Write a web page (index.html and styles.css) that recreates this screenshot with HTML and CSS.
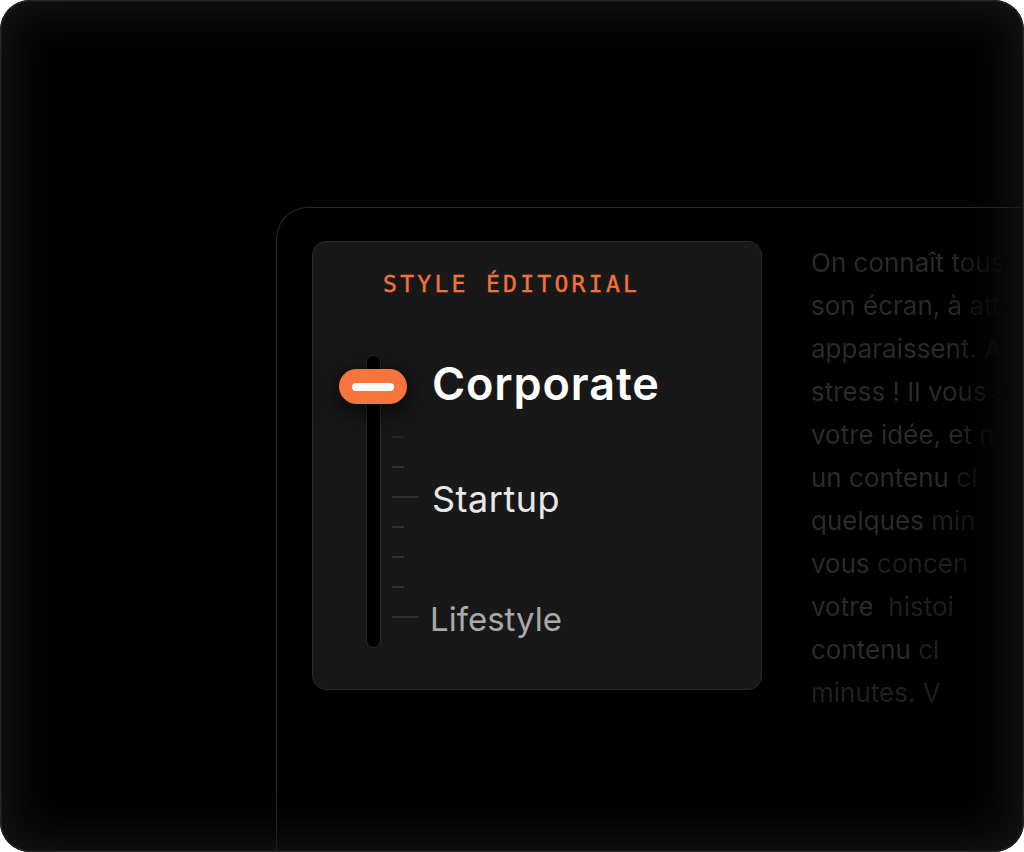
FILE: index.html
```html
<!DOCTYPE html>
<html lang="fr">
<head>
<meta charset="utf-8">
<title>Style éditorial</title>
<link rel="stylesheet" href="styles.css">
</head>
<body>
<div class="frame">
  <div class="window">
    <section class="card">
      <h2 class="card-title">STYLE ÉDITORIAL</h2>
      <div class="scale">
        <div class="track">
          <div class="knob"><span class="knob-bar"></span></div>
        </div>
        <div class="ticks">
          <span class="tick faint"></span>
          <span class="tick"></span>
          <span class="tick long"></span>
          <span class="tick"></span>
          <span class="tick"></span>
          <span class="tick"></span>
          <span class="tick long"></span>
        </div>
        <div class="labels">
          <span class="label active">Corporate</span>
          <span class="label mid">Startup</span>
          <span class="label low">Lifestyle</span>
        </div>
      </div>
    </section>
    <div class="copy">
      <div class="line">On connaît tous</div>
      <div class="line">son écran, à <span class="dim">atte</span></div>
      <div class="line">apparaissent. <span class="dim">Av</span></div>
      <div class="line">stress ! Il vous <span class="dim">s</span></div>
      <div class="line">votre idée, et <span class="dim">n</span></div>
      <div class="line">un contenu <span class="dim">cl</span></div>
      <div class="line">quelques <span class="dim">min</span></div>
      <div class="line">vous <span class="dim">concen</span></div>
      <div class="line">votre&nbsp; <span class="dim">histoi</span></div>
      <div class="line">contenu <span class="dim">cl</span></div>
      <div class="line"><span class="dimmer">minutes.</span> <span class="dim">V</span></div>
    </div>
  </div>
</div>
</body>
</html>
```

FILE: styles.css
```css
html, body {
  margin: 0;
  padding: 0;
  background: #ffffff;
}

.frame {
  position: relative;
  width: 1024px;
  height: 852px;
  box-sizing: border-box;
  border-radius: 30px;
  background: #000;
  overflow: hidden;
  padding: 207px 0 0 276px;
  font-family: "Inter", "Noto Sans", sans-serif;
}

.frame::after {
  content: "";
  position: absolute;
  inset: 0;
  border-radius: 30px;
  pointer-events: none;
  box-shadow: inset 0 0 0 1.5px #242424, inset 0 0 46px 14px #141414;
}

.window {
  box-sizing: border-box;
  height: 100%;
  width: 900px;
  border: 1px solid #2b2b2b;
  border-right: none;
  border-bottom: none;
  border-top-left-radius: 32px;
  padding: 33px 0 0 35px;
  display: flex;
  gap: 49px;
}

.card {
  flex: none;
  box-sizing: border-box;
  width: 450px;
  height: 449px;
  background: #181818;
  border: 1px solid #2a2a2a;
  border-radius: 14px;
  padding: 30px 0 0 53px;
}

.card-title {
  margin: 0 0 59px 17px;
  font-family: "DejaVu Sans Mono", "Liberation Mono", monospace;
  font-size: 23px;
  line-height: 24px;
  font-weight: 400;
  letter-spacing: 3.3px;
  color: #f4713a;
  -webkit-text-stroke: 0.4px #f4713a;
}

.scale {
  display: flex;
}

.track {
  position: relative;
  flex: none;
  box-sizing: border-box;
  width: 15px;
  height: 293px;
  background: #000;
  border: 1px solid #2c2c2c;
  border-radius: 8px;
}

.knob {
  position: absolute;
  top: 13px;
  left: -28px;
  box-sizing: border-box;
  width: 68px;
  height: 35px;
  border-radius: 18px;
  background: #f7743c;
  display: flex;
  align-items: center;
  justify-content: center;
  box-shadow: 0 6px 22px 6px rgba(0, 0, 0, 0.55);
}

.knob-bar {
  width: 42px;
  height: 8px;
  border-radius: 4px;
  background: #fff;
}

.ticks {
  flex: none;
  width: 26px;
  margin-left: 11px;
  padding-top: 81px;
  display: flex;
  flex-direction: column;
  gap: 28px;
}

.tick {
  display: block;
  width: 12px;
  height: 2px;
  background: #333333;
}

.tick.faint {
  background: #262626;
}

.tick.long {
  width: 26px;
}

.labels {
  margin-left: 14px;
  padding-top: 6px;
  display: flex;
  flex-direction: column;
  align-items: flex-start;
}

.label {
  display: block;
  line-height: 1;
  white-space: nowrap;
}

.label.active {
  font-size: 45px;
  font-weight: 600;
  color: #ffffff;
  letter-spacing: 0.9px;
}

.label.mid {
  margin-top: 75px;
  font-size: 36px;
  font-weight: 400;
  color: #e8e8e8;
  letter-spacing: 0.5px;
}

.label.low {
  margin-top: 86px;
  margin-left: -2px;
  font-size: 33px;
  font-weight: 400;
  color: #a9a9a9;
}

.copy {
  flex: none;
  font-size: 26px;
  line-height: 43px;
  color: #2a2a2a;
  white-space: nowrap;
  -webkit-mask-image: linear-gradient(to right, #000 140px, transparent 200px);
  mask-image: linear-gradient(to right, #000 140px, transparent 200px);
}

.line .dim {
  color: #1e1e1e;
}

.line .dimmer {
  color: #202020;
}
```
